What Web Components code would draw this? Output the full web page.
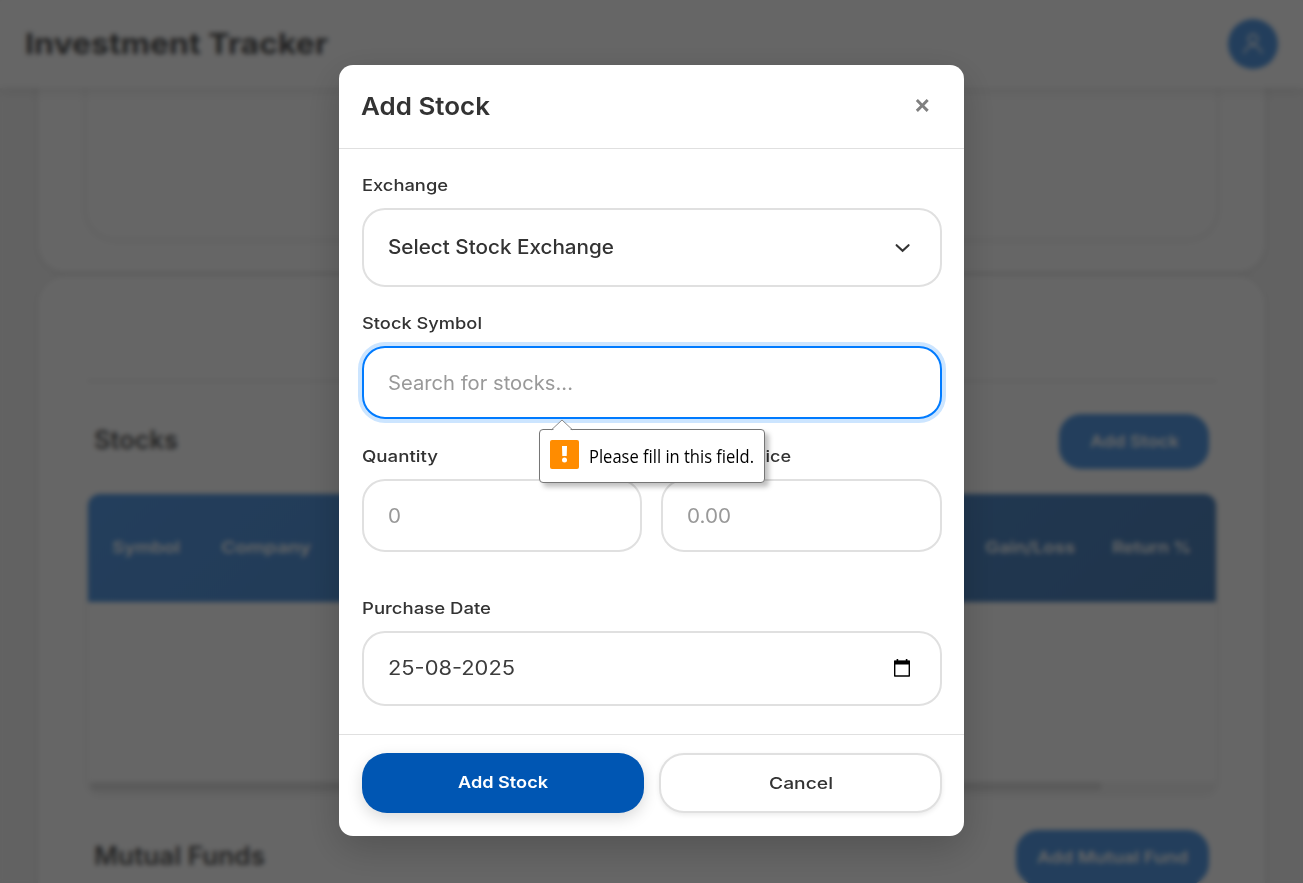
<!DOCTYPE html>
<html lang="en">
<head>
<meta charset="utf-8">
<title>Investment Tracker</title>
<style>
html,body{margin:0;height:100%;overflow:hidden}
body{font-family:Inter,"Open Sans",sans-serif;color:#333;background:#f5f6f7}
</style>
</head>
<body>
<tracker-app></tracker-app>
<script>
function define(name, html, ready) {
  const tpl = document.createElement('template');
  tpl.innerHTML = html;
  customElements.define(name, class extends HTMLElement {
    constructor() {
      super();
      this.attachShadow({ mode: 'open' }).appendChild(tpl.content.cloneNode(true));
    }
    connectedCallback() { if (ready) ready.call(this, this.shadowRoot); }
  });
}

/* Text widened or narrowed so that its advance equals the "w" attribute. */
define('fit-text', `<style>:host{display:inline-block;white-space:nowrap}span{display:inline-block;transform-origin:0 50%}</style><span><slot></slot></span>`,
  function (root) {
    const w = parseFloat(this.getAttribute('w'));
    const span = root.querySelector('span');
    const natural = span.getBoundingClientRect().width;
    if (w && natural) {
      span.style.transform = 'scaleX(' + (w / natural).toFixed(4) + ')';
      this.style.width = w + 'px';
    }
  });

define('pill-button', `<style>
:host{display:flex;align-items:center;justify-content:center;box-sizing:border-box;height:55px;padding-bottom:2px;border-radius:22px;background:#589ce6;color:#fff;font-size:16.5px;font-weight:600}
:host([kind=primary]){height:60px;border-radius:25px;background:#0056b3;box-shadow:0 5px 15px rgba(0,0,0,.15)}
:host([kind=plain]){height:60px;padding-bottom:1px;border-radius:25px;background:#fff;border:2px solid #e0e0e0;color:#333;font-weight:500;box-shadow:0 2px 5px rgba(0,0,0,.08)}
</style><slot></slot>`);

define('user-avatar', `<style>
:host{display:flex;align-items:center;justify-content:center;width:50px;height:50px;border-radius:50%;background:#589ce6}
svg{display:block}
</style><svg width="24" height="24" viewBox="0 0 24 24" fill="none" stroke="#fff" stroke-opacity=".8" stroke-width="2.2"><circle cx="12" cy="7" r="4.600"/><path d="M3 21.500c1.500-5 4.500-8 9-8s7.500 3 9 8"/></svg>`);

define('top-bar', `<style>
:host{display:flex;align-items:center;justify-content:space-between;box-sizing:border-box;height:88px;padding:0 25px 0 25px;background:rgba(255,255,255,.9);box-shadow:0 2px 12px rgba(0,0,0,.1);position:relative;z-index:2}
.t{font-size:29px;font-weight:700;color:#555;padding-bottom:2px}
</style><div class="t"><fit-text w="303">Investment Tracker</fit-text></div><user-avatar></user-avatar>`);

define('page-panel', `<style>
:host{display:block;box-sizing:border-box;background:#fff;border-radius:28px;box-shadow:0 1px 8px rgba(0,0,0,.09)}
</style><slot></slot>`);

define('section-head', `<style>
:host{display:flex;align-items:center;justify-content:space-between;height:55px;padding:0 7px 0 6px;font-size:25px;font-weight:600;color:#5c5c5c}
::slotted([slot=title]){padding-bottom:3px}
</style><slot name="title"></slot><slot name="action"></slot>`);

define('stock-table', `<style>
:host{display:block;box-sizing:border-box;height:298px;border-radius:12px;overflow:hidden;background:#fff;box-shadow:0 2px 7px rgba(0,0,0,.09)}
.head{display:grid;grid-template-columns:109px 764px 127px 1fr;align-items:center;height:108px;padding:0 0 3px 24px;box-sizing:border-box;background:linear-gradient(135deg,#589ce6,#4f83bc);color:#fff;font-size:16px;font-weight:600}
.body{height:180px}
.bar{height:9px;background:#f5f5f5}
.thumb{width:1012px;height:9px;margin-left:2px;background:#e2e2e2;border-radius:5px}
</style>
<div class="head"><fit-text w="68">Symbol</fit-text><fit-text w="90">Company</fit-text><fit-text w="90">Gain/Loss</fit-text><fit-text w="79">Return %</fit-text></div>
<div class="body"></div><div class="bar"><div class="thumb"></div></div>`);

define('dashboard-page', `<style>
:host{display:block;height:883px;overflow:hidden;background:#f6f6f6}
.content{margin:-88px 38px 0;display:flex;flex-direction:column;gap:4px}
.first{height:272px;padding:10px 49px 34px;border-radius:0 0 28px 28px}
.first page-panel{height:228px}
.second{height:760px;padding:104px 49px 0 50px}
hr{border:0;height:2px;margin:0;background:#ebebeb}
.stocks{margin-top:32px}
stock-table{margin-top:25px}
.funds{margin-top:38px}
pill-button.s{width:150px}pill-button.m{width:193px}
</style>
<top-bar></top-bar>
<div class="content">
<page-panel class="first"><page-panel></page-panel></page-panel>
<page-panel class="second"><hr>
<section-head class="stocks"><fit-text slot="title" w="84">Stocks</fit-text><pill-button class="s" slot="action"><fit-text w="89">Add Stock</fit-text></pill-button></section-head>
<stock-table></stock-table>
<section-head class="funds"><fit-text slot="title" w="171">Mutual Funds</fit-text><pill-button class="m" slot="action"><fit-text w="151">Add Mutual Fund</fit-text></pill-button></section-head>
</page-panel></div>`);

define('form-field', `<style>
:host{display:block;position:relative}
.label{display:flex;align-items:center;height:20px;margin-bottom:13px;font-size:16.4px;font-weight:500;color:#333}
.box{display:flex;align-items:center;justify-content:space-between;box-sizing:border-box;height:var(--box,73px);padding:0 28px 0 24px;border:2px solid #e0e0e0;border-radius:23px;background:#fff;font-size:19.6px;color:#999}
:host([kind=select]) .box{font-weight:500;color:#333;padding-bottom:2px}
:host([kind=date]) .box{color:#3c3c3c;padding-bottom:2px}
:host([focused]) .box{border-color:#007bff;box-shadow:0 0 0 4px #cce5ff}
</style><div class="label"><slot name="label"></slot></div><div class="box"><slot></slot></div><slot name="hint"></slot>`);

define('validation-hint', `<style>
:host{position:absolute;left:177px;top:116px;z-index:5;display:flex;align-items:center;box-sizing:border-box;width:226px;height:54px;padding:0 10px;gap:10px;background:#fff;border:1px solid #767676;border-radius:4px;box-shadow:4px 4px 5px rgba(0,0,0,.25);font-family:"Open Sans","Noto Sans",sans-serif;font-size:17.4px;color:#000}
.tip{position:absolute;left:11px;top:-11px}
.icon{margin-top:-3px;flex:none}
svg{display:block}
</style>
<svg class="tip" width="22" height="12" viewBox="0 0 22 12"><path d="M1 12 11 1.2 21 12" fill="#fff"/><path d="M.7 10.6 11 1 21.300 10.6" fill="none" stroke="#8a8a8a"/></svg>
<svg class="icon" width="29" height="29" viewBox="0 0 29 29"><rect width="29" height="29" rx="2" fill="#ff8c00"/><path d="M12 6h5l-.3 10h-4.400z" fill="#fff"/><circle cx="14.500" cy="20" r="2.500" fill="#fff"/></svg>
<fit-text w="165">Please fill in this field.</fit-text>`);

define('chevron-icon', `<style>:host,svg{display:block}</style><svg width="20" height="20" viewBox="0 0 20 20" fill="none" stroke="#333" stroke-width="2.100" stroke-linecap="round" stroke-linejoin="miter"><path d="M4.600 8.200 10.600 13.800 16.600 8.200"/></svg>`);

define('calendar-icon', `<style>:host,svg{display:block}</style><svg width="20" height="20" viewBox="0 0 20 20"><path d="M2.700 3.200h14.600v14.800H2.700z" fill="none" stroke="#000" stroke-width="1.400" stroke-linejoin="round"/><path d="M2 2.700h16v3.800H2zM4.600 1h1.600v2H4.600zM13.800 1h1.600v2h-1.600z" fill="#000"/></svg>`);

define('modal-dialog', `<style>
:host{display:flex;flex-direction:column;box-sizing:border-box;width:625px;height:771px;background:#fff;border-radius:14px;box-shadow:0 12px 38px rgba(0,0,0,.2)}
header{display:flex;align-items:center;justify-content:space-between;height:81px;padding:0 33px 2px 22px;border-bottom:1px solid #e0e0e0;font-size:24.6px;font-weight:600;color:#333}
.x{font-size:26px;font-weight:600;color:#808080;line-height:30px;margin-top:-3px}
main{flex:1;padding:26px 22px 0 23px}
footer{display:grid;grid-template-columns:282px 283px;gap:15px;height:102px;box-sizing:border-box;padding:18px 22px 0 23px;border-top:1px solid #e0e0e0}
</style><header><slot name="title"></slot><span class="x">×</span></header><main><slot></slot></main><footer><slot name="actions"></slot></footer>`);

define('tracker-app', `<style>
:host{display:grid;height:883px;overflow:hidden}
:host>*{grid-area:1/1}
.overlay{display:flex;justify-content:center;align-items:flex-start;padding:65px 0 0;z-index:10;background:rgba(0,0,0,.6);backdrop-filter:blur(2.5px)}
.gap1{margin-top:26px}.gap2{margin-top:27px}.gap3{margin-top:46px}
.row{display:grid;grid-template-columns:280px 281px;gap:19px}
.tall{--box:79px}.date{--box:75px}
</style>
<dashboard-page></dashboard-page>
<div class="overlay"><modal-dialog>
<fit-text slot="title" w="129">Add Stock</fit-text>
<form-field class="tall" kind="select"><fit-text slot="label" w="86">Exchange</fit-text><fit-text w="226">Select Stock Exchange</fit-text><chevron-icon></chevron-icon></form-field>
<form-field class="gap1" focused><fit-text slot="label" w="120">Stock Symbol</fit-text><fit-text w="185">Search for stocks...</fit-text><validation-hint slot="hint"></validation-hint></form-field>
<div class="row gap2">
<form-field><fit-text slot="label" w="76">Quantity</fit-text><fit-text w="13">0</fit-text></form-field>
<form-field><fit-text slot="label" w="130">Purchase Price</fit-text><fit-text w="44">0.00</fit-text></form-field>
</div>
<form-field class="gap3 date" kind="date"><fit-text slot="label" w="129">Purchase Date</fit-text><fit-text w="127">25-08-2025</fit-text><calendar-icon></calendar-icon></form-field>
<pill-button kind="primary" slot="actions"><fit-text w="90">Add Stock</fit-text></pill-button>
<pill-button kind="plain" slot="actions"><fit-text w="64">Cancel</fit-text></pill-button>
</modal-dialog></div>`);
</script>
</body>
</html>
